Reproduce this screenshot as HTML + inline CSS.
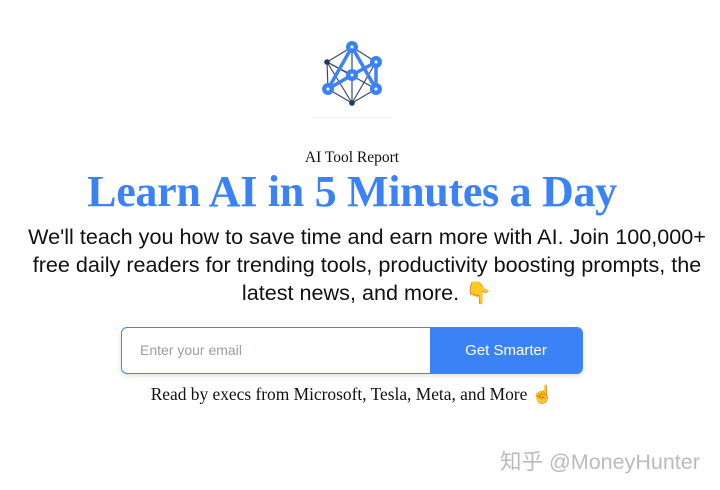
<!DOCTYPE html>
<html><head><meta charset="utf-8"><style>
html,body{margin:0;padding:0;background:#fff;width:720px;height:490px;overflow:hidden;position:relative}
.c{position:absolute;left:0;width:720px;text-align:center;white-space:nowrap}
.serif{font-family:"Liberation Serif",serif}
.sans{font-family:"Liberation Sans",sans-serif}
</style></head><body>
<svg style="position:absolute;left:0;top:0" width="720" height="130">
<g stroke="#3a4a6b" stroke-width="1.2" fill="none">
<line x1="352" y1="47" x2="327" y2="62"/><line x1="352" y1="47" x2="376" y2="62"/>
<line x1="327" y1="62" x2="328" y2="89"/><line x1="327" y1="62" x2="352" y2="75"/>
<line x1="327" y1="62" x2="376" y2="89"/><line x1="376" y1="62" x2="328" y2="89"/>
<line x1="328" y1="89" x2="352" y2="103"/><line x1="376" y1="89" x2="352" y2="103"/>
<line x1="352" y1="47" x2="352" y2="103"/><line x1="327" y1="62" x2="352" y2="103"/>
<line x1="376" y1="62" x2="352" y2="103"/>
</g>
<g stroke="#3b82f6" stroke-width="3.5" fill="none">
<line x1="352" y1="47" x2="328" y2="89"/><line x1="352" y1="47" x2="376" y2="89"/>
<line x1="376" y1="62" x2="376" y2="89"/><line x1="376" y1="62" x2="352" y2="75"/>
<line x1="328" y1="89" x2="352" y2="75"/>
</g>
<g fill="#3b82f6">
<circle cx="352" cy="47" r="6"/><circle cx="376" cy="62" r="6"/><circle cx="352" cy="75" r="6"/>
<circle cx="328" cy="89" r="6"/><circle cx="376" cy="89" r="6"/></g>
<g fill="#fff"><circle cx="352" cy="47" r="1.5"/><circle cx="376" cy="62" r="1.5"/><circle cx="352" cy="75" r="1.5"/><circle cx="328" cy="89" r="1.5"/><circle cx="376" cy="89" r="1.5"/></g>
<g fill="#1e3a5f"><circle cx="327" cy="62" r="2.8"/><circle cx="352" cy="103" r="2.8"/></g>
<rect x="312" y="117" width="80" height="1" fill="#f3f3f3"/>
</svg>
<div class="c serif" style="top:149px;left:-8px;font-size:15.5px;color:#111">AI Tool Report</div>
<div class="c serif" style="top:166px;left:-8px;font-size:44px;font-weight:bold;color:#3b82f6;line-height:52px;letter-spacing:-0.3px">Learn AI in 5 Minutes a Day</div>
<div class="c sans" style="top:223px;left:7px;font-size:21.6px;line-height:28px;color:#111">We'll teach you how to save time and earn more with AI. Join 100,000+<br>free daily readers for trending tools, productivity boosting prompts, the<br>latest news, and more. 👇</div>
<div style="position:absolute;left:121px;top:327px;width:460px;height:45px;border:1.5px solid #4a86d8;border-radius:6px;overflow:hidden;box-shadow:0 2px 6px rgba(0,0,0,.12);background:#fff">
<div class="sans" style="position:absolute;left:18px;top:0;line-height:45px;font-size:14px;color:#9aa0a6">Enter your email</div>
<div class="sans" style="position:absolute;left:308px;top:0;width:152px;height:45px;background:#3b82f6;color:#fff;font-size:15px;line-height:45px;text-align:center">Get Smarter</div>
</div>
<div class="c serif" style="top:384px;left:-8px;font-size:17.4px;color:#111">Read by execs from Microsoft, Tesla, Meta, and More ☝️</div>
<div class="sans" style="position:absolute;left:500px;top:445px;font-size:21.5px;color:#bbb;font-family:'Liberation Sans','Noto Sans CJK SC',sans-serif">知乎 @MoneyHunter</div>
</body></html>
